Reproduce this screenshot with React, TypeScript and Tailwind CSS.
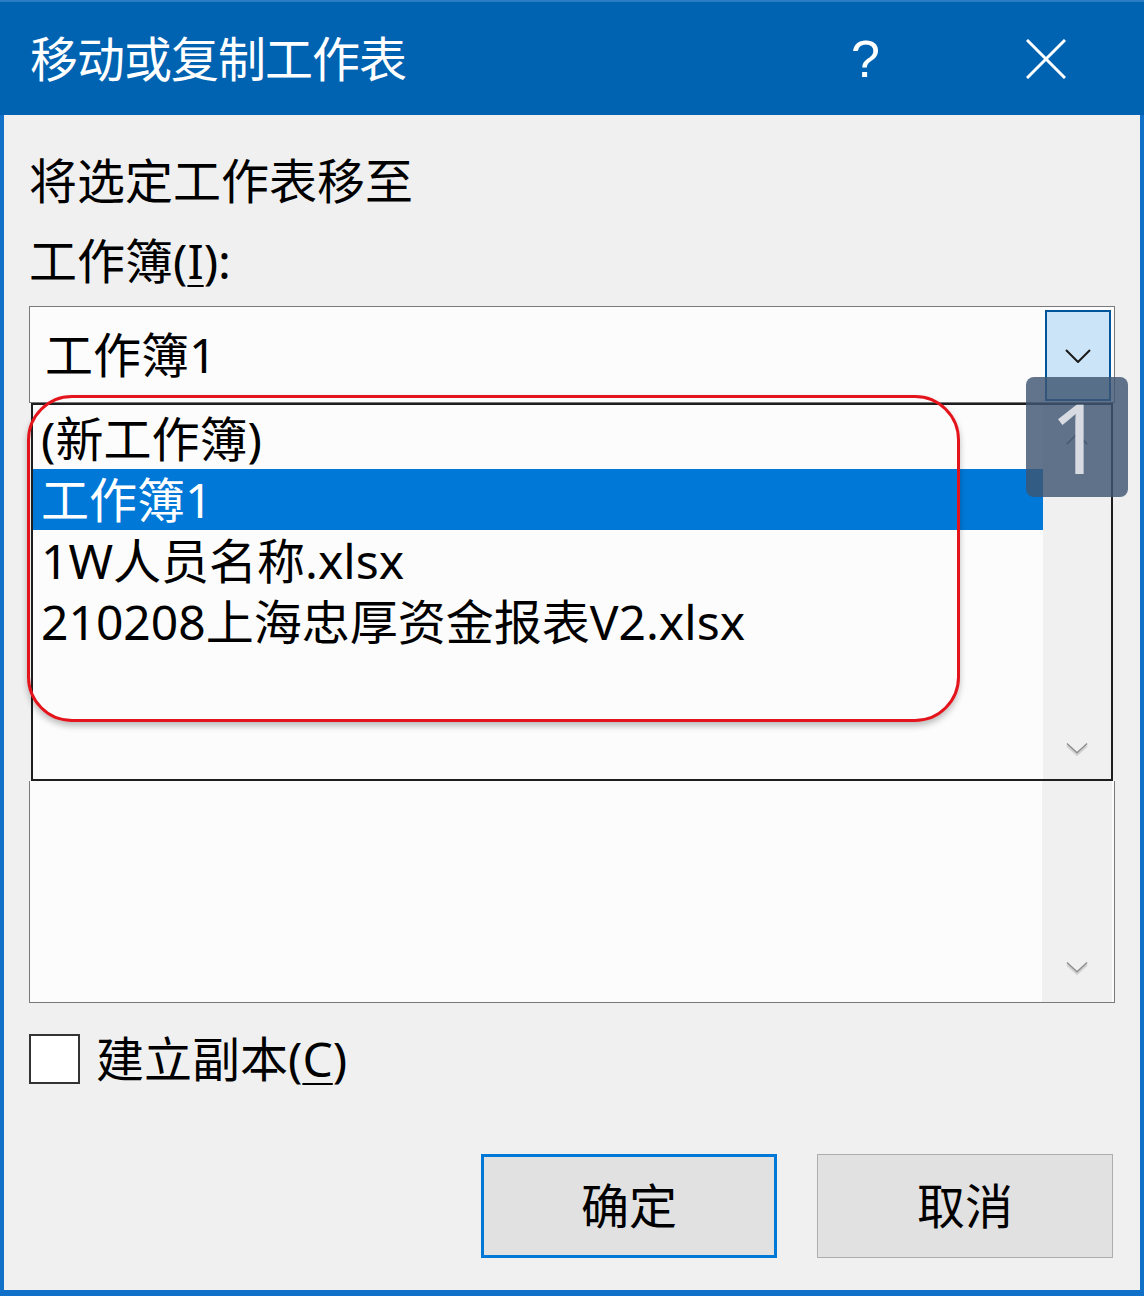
import React from 'react';

const font = { fontFamily: '"Noto Sans", "Noto Sans CJK SC", sans-serif' };

const Chevron: React.FC<{ className?: string; up?: boolean }> = ({ className, up }) => (
  <svg viewBox="0 0 26 14" className={className} fill="none">
    <path
      d={up ? 'M1 13 L13 1 L25 13' : 'M1 1 L13 13 L25 1'}
      stroke="currentColor"
      strokeWidth="2"
      strokeLinejoin="miter"
    />
  </svg>
);

// the embossed grey arrow of a disabled scrollbar
const ScrollArrow: React.FC<{ className?: string }> = ({ className }) => (
  <svg viewBox="0 0 24 16" className={className} fill="none">
    <path d="M1 4 L12 14 L23 4" stroke="#d0d0d0" strokeWidth="2" />
    <path d="M1 1.5 L12 11.5 L23 1.5" stroke="#8c8c8c" strokeWidth="1.6" />
  </svg>
);

const items = ['(新工作簿)', '工作簿1', '1W人员名称.xlsx', '210208上海忠厚资金报表V2.xlsx'];

const App: React.FC = () => {
  return (
    <div
      className="w-[1144px] h-[1296px] flex flex-col bg-[#f0f0f0] border-x-4 border-b-[6px] border-[#1170c8] text-black relative"
      style={font}
    >
      {/* Title bar */}
      <div className="h-[115px] -mx-1 bg-[#0063b1] border-t-2 border-[#2a7cc4] flex items-center pl-[30px] shrink-0">
        <span className="text-white text-[48px] leading-none tracking-[-1px]">移动或复制工作表</span>
        <span className="ml-auto mr-[146px] text-white text-[52px] leading-none font-light" style={{ fontFamily: '"Liberation Sans", sans-serif' }}>
          ?
        </span>
        <svg viewBox="0 0 40 40" className="w-[40px] h-[40px] mr-[78px]">
          <path d="M1 1 L39 39 M39 1 L1 39" stroke="white" strokeWidth="3" />
        </svg>
      </div>

      <div className="flex-1 flex flex-col px-[25px] relative">
        <div className="mt-[36px] text-[48px] leading-[60px]">将选定工作表移至</div>
        <div className="mt-[20px] text-[48px] leading-[60px]">
          工作簿(<span className="underline underline-offset-[6px] decoration-2">I</span>):
        </div>

        {/* Combo box */}
        <div className="mt-[15px] h-[97px] border border-[#7a7a7a] bg-[#fcfcfc] flex items-center relative">
          <span className="pl-[15px] text-[48px] leading-none">工作簿1</span>
          <div className="absolute right-[3px] top-[3px] w-[66px] h-[91px] bg-[#cce4f7] border-2 border-[#005499] flex items-center justify-center">
            <Chevron className="w-[26px] h-[14px] text-[#1a1a1a]" />
          </div>
        </div>

        {/* Drop-down list */}
        <div className="mx-[2px] h-[378px] border-2 border-[#1e1e1e] bg-[#fcfcfc] flex">
          <div className="flex-1 pt-[3px]">
            {items.map((t, i) => (
              <div
                key={t}
                className={
                  i === 1
                    ? 'h-[61px] flex items-center pl-[8px] text-[48px] leading-none bg-[#0078d7] text-white'
                    : 'h-[61px] flex items-center pl-[8px] text-[48px] leading-none'
                }
              >
                {t}
              </div>
            ))}
          </div>
          <div className="w-[68px] bg-[#f0f0f0] flex flex-col items-center justify-between pt-[28px] pb-[22px]">
            <Chevron up className="w-[22px] h-[12px] text-[#7a7a7a]" />
            <ScrollArrow className="w-[22px] h-[15px]" />
          </div>
        </div>

        {/* Sheet list behind */}
        <div className="h-[222px] border border-t-0 border-[#7a7a7a] bg-[#fcfcfc] flex pl-[3px] pr-[2px]">
          <div className="flex-1" />
          <div className="w-[70px] bg-[#f0f0f0] flex flex-col items-center justify-end pb-[26px]">
            <ScrollArrow className="w-[22px] h-[15px]" />
          </div>
        </div>

        {/* Checkbox */}
        <div className="mt-[31px] flex items-center">
          <div className="w-[51px] h-[50px] border-2 border-[#333] bg-white" />
          <span className="ml-[16px] text-[48px] leading-none">
            建立副本(<span className="underline underline-offset-[6px] decoration-2">C</span>)
          </span>
        </div>

        {/* Buttons */}
        <div className="mt-[70px] flex justify-end gap-[40px] pr-[2px]">
          <button className="w-[296px] h-[104px] bg-[#e1e1e1] border-[3px] border-[#0078d7] text-[48px] leading-none">
            确定
          </button>
          <button className="w-[296px] h-[104px] bg-[#e1e1e1] border border-[#adadad] text-[48px] leading-none">
            取消
          </button>
        </div>

        {/* Red highlight around the list items */}
        <div className="absolute left-[23px] top-[280px] w-[933px] h-[327px] border-[3px] border-[#e3141b] rounded-[45px] shadow-[0_4px_6px_rgba(0,0,0,0.25)] pointer-events-none" />

        {/* Page number badge */}
        <div className="absolute left-[1022px] top-[262px] w-[102px] h-[120px] rounded-[8px] bg-[rgba(62,86,114,0.82)] flex items-center justify-center">
          <span className="text-[96px] leading-none text-[#d8dce2] font-normal" style={{ fontFamily: '"Noto Sans", sans-serif' }}>
            1
          </span>
        </div>
      </div>
    </div>
  );
};

export default App;
